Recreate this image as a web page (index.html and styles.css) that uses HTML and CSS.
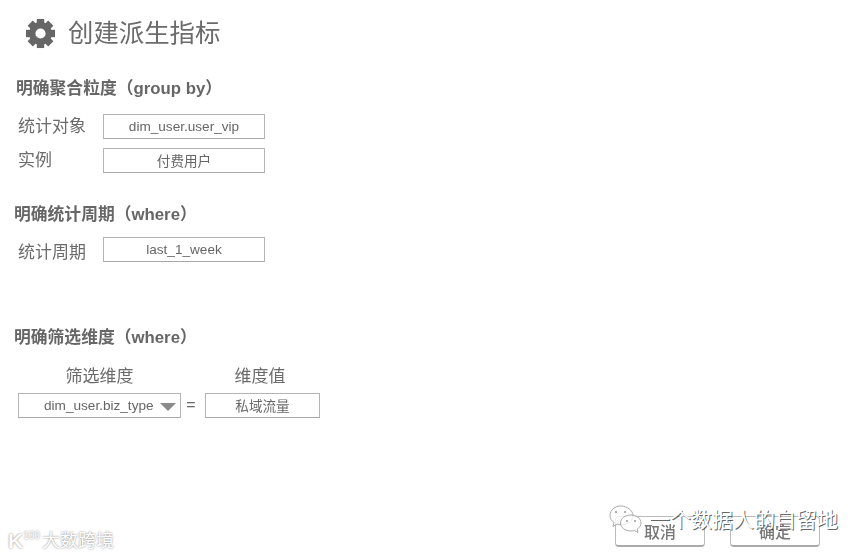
FILE: index.html
```html
<!DOCTYPE html>
<html lang="zh-CN">
<head>
    <meta charset="UTF-8">
    <title>创建派生指标</title>
    <link rel="stylesheet" href="styles.css">
</head>
<body>
    <div class="page">
        <header class="title-bar">
            <svg class="gear" viewBox="0 0 32 32">
                <circle cx="16" cy="16" r="8.5" fill="none" stroke="#666" stroke-width="6.500"/>
                <g fill="#666">
                    <rect x="12.2" y="1" width="7.6" height="6"/>
                    <rect x="12.2" y="1" width="7.6" height="6" transform="rotate(45 16 16)"/>
                    <rect x="12.2" y="1" width="7.6" height="6" transform="rotate(90 16 16)"/>
                    <rect x="12.2" y="1" width="7.6" height="6" transform="rotate(135 16 16)"/>
                    <rect x="12.2" y="1" width="7.6" height="6" transform="rotate(180 16 16)"/>
                    <rect x="12.2" y="1" width="7.6" height="6" transform="rotate(225 16 16)"/>
                    <rect x="12.2" y="1" width="7.6" height="6" transform="rotate(270 16 16)"/>
                    <rect x="12.2" y="1" width="7.6" height="6" transform="rotate(315 16 16)"/>
                </g>
            </svg>
            <h1>创建派生指标</h1>
        </header>

        <section class="group group-grain">
            <h2>明确聚合粒度（group by）</h2>
            <div class="row">
                <span class="label">统计对象</span>
                <div class="field">dim_user.user_vip</div>
            </div>
            <div class="row">
                <span class="label">实例</span>
                <div class="field field-cn">付费用户</div>
            </div>
        </section>

        <section class="group group-period">
            <h2>明确统计周期（where）</h2>
            <div class="row">
                <span class="label">统计周期</span>
                <div class="field">last_1_week</div>
            </div>
        </section>

        <section class="group group-filter">
            <h2>明确筛选维度（where）</h2>
            <div class="filter-grid">
                <span class="col-title">筛选维度</span>
                <span></span>
                <span class="col-title col-value">维度值</span>
                <div class="field select">
                    <span>dim_user.biz_type</span>
                    <i class="caret"></i>
                </div>
                <span class="equals">=</span>
                <div class="field field-cn">私域流量</div>
            </div>
        </section>

        <footer class="actions">
            <button class="btn">取消</button>
            <button class="btn">确定</button>
        </footer>
    </div>

    <div class="mark mark-left">
        <span class="mark-logo">K<sup>100</sup></span>
        <span>大数跨境</span>
    </div>

    <div class="mark mark-right">
        <svg class="wechat" viewBox="0 0 36 30">
            <g fill="#fff" fill-opacity="0.75" stroke="#aaa" stroke-width="1">
                <path d="M13 1C7 1 2 5 2 10.500c0 3 1.500 5.300 4 7l-1 4 4-2.500c1.500.5 3 .7 5 .7 6 0 11-4.300 11-9.200S19 1 13 1z"/>
                <path d="M23 10c-6 0-10.500 3.500-10.500 8s4.500 8 10.500 8c1.200 0 2.400-.2 3.500-.5l3.500 2-.8-3.400c2.300-1.500 3.800-3.700 3.800-6.100 0-4.500-4.500-8-10-8z"/>
            </g>
            <g fill="#999">
                <circle cx="8" cy="7" r="1"/>
                <circle cx="17" cy="7" r="1"/>
                <circle cx="19" cy="16" r="1"/>
                <circle cx="27" cy="16" r="1"/>
            </g>
        </svg>
        <span>一个数据人的自留地</span>
    </div>
</body>
</html>
```

FILE: styles.css
```css
body {
    margin: 0;
    width: 866px;
    height: 558px;
    overflow: hidden;
    position: relative;
    background: #fff;
    color: #666;
    font-family: "Liberation Sans", "Noto Sans CJK SC", sans-serif;
}

.page {
    padding-top: 18px;
    filter: blur(0.35px);
}

.title-bar {
    display: flex;
    align-items: center;
    gap: 12px;
    height: 30px;
    padding-left: 25px;
}

.gear {
    width: 31px;
    height: 31px;
}

.title-bar h1 {
    margin: 0;
    font-size: 25.4px;
    font-weight: 400;
    line-height: 30px;
    color: #6b6b6b;
}

.group h2 {
    margin: 0;
    font-size: 16.8px;
    font-weight: 700;
    line-height: 20px;
    height: 20px;
    color: #666;
}

.group-grain {
    margin-top: 31px;
    padding-left: 16px;
}

.group-period {
    margin-top: 32px;
    padding-left: 14px;
}

.group-filter {
    margin-top: 66px;
    padding-left: 14px;
}

.row {
    display: flex;
    align-items: center;
    height: 25px;
    margin-top: 9px;
}

.group-grain h2 + .row {
    margin-top: 15px;
}

.group-period h2 + .row {
    margin-top: 12px;
}

.label {
    font-size: 17px;
    line-height: 25px;
    color: #6b6b6b;
}

.group-grain .label {
    width: 85px;
    margin-left: 2px;
}

.group-period .label {
    width: 85px;
    margin-left: 4px;
    margin-top: 6px;
}

.field {
    box-sizing: border-box;
    display: flex;
    align-items: center;
    justify-content: center;
    height: 25px;
    border: 1px solid #b4b4b4;
    border-bottom-color: #a8a8a8;
    font-size: 13.6px;
    color: #666;
    background: #fff;
}

.field-cn {
    padding-bottom: 2px;
}

.row .field {
    width: 162px;
}

.filter-grid {
    display: grid;
    grid-template-columns: 163px 24px 115px;
    margin-top: 19px;
    margin-left: 4px;
}

.col-title {
    height: 20px;
    margin-bottom: 6px;
    font-size: 17px;
    line-height: 20px;
    text-align: center;
    color: #6b6b6b;
}

.col-value {
    padding-right: 5px;
}

.select {
    justify-content: flex-start;
    gap: 6px;
    padding-left: 25px;
}

.caret {
    width: 0;
    height: 0;
    border-left: 8px solid transparent;
    border-right: 8px solid transparent;
    border-top: 8px solid #8a8a8a;
    margin-top: 2px;
}

.equals {
    padding-right: 4px;
    font-size: 16px;
    line-height: 23px;
    text-align: center;
}

.actions {
    display: flex;
    gap: 25px;
    margin-top: 98px;
    padding-left: 615px;
}

.btn {
    width: 90px;
    height: 31px;
    padding: 0;
    border: 1px solid #bbb;
    border-bottom: 2px solid #aaa;
    border-radius: 4px;
    background: #fff;
    color: #777;
    font-family: inherit;
    font-size: 16px;
    font-weight: 500;
}

/* watermarks sit on top of the picture */
.mark {
    position: absolute;
    display: flex;
    align-items: center;
    color: #fff;
}

.mark-left {
    left: 8px;
    top: 529px;
    gap: 3px;
    font-size: 18px;
    line-height: 24px;
    text-shadow: 0 0 2px #777;
}

.mark-logo {
    width: 31px;
    font-size: 21px;
    font-weight: 700;
    white-space: nowrap;
}

.mark-logo sup {
    font-size: 10px;
    font-weight: 400;
    vertical-align: 9px;
    line-height: 0;
}

.mark-right {
    right: 28px;
    top: 505px;
    gap: 5px;
    font-size: 21px;
    line-height: 30px;
    text-shadow: 1px 1px 0.5px rgba(0, 0, 0, 0.6);
}

.wechat {
    width: 36px;
    height: 30px;
}
```
